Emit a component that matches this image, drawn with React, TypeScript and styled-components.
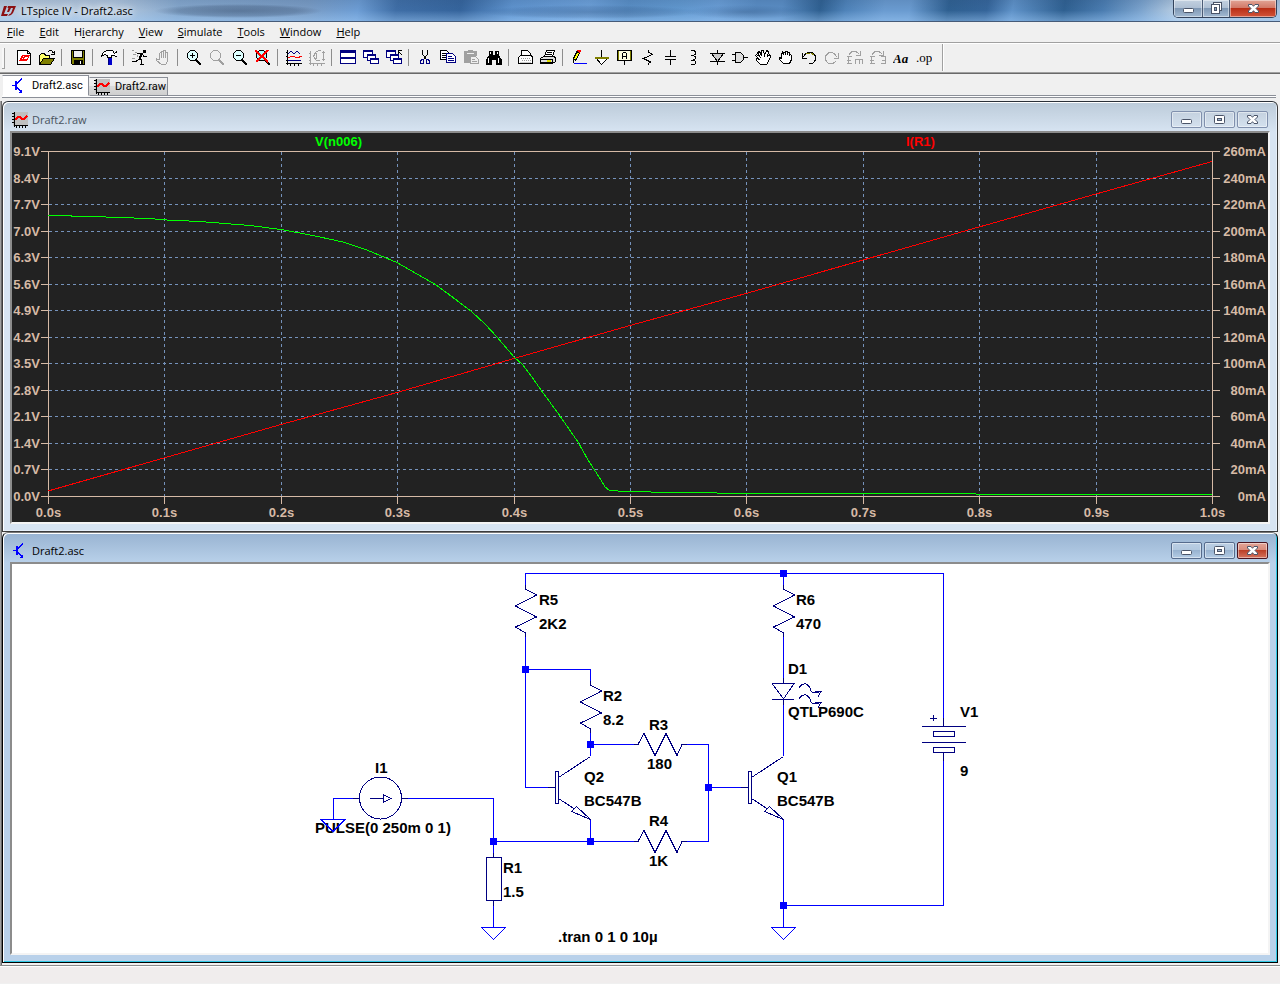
import React from 'react';
import styled, { createGlobalStyle } from 'styled-components';

const GlobalStyle = createGlobalStyle`
  * { box-sizing: border-box; }
  body { margin: 0; background: #f0f0f0; }
  button { font: inherit; color: inherit; margin: 0; padding: 0; border: 0; background: none; }
  svg { display: block; flex-shrink: 0; }
`;

const Shell = styled.div`
  display: flex;
  flex-direction: column;
  min-height: 100vh;
  font-family: 'Open Sans', 'Noto Sans', sans-serif;
  font-size: 11px;
  line-height: 16px;
  color: #000;
  background: #f0f0f0;
`;

const TitleBar = styled.header`
  display: flex;
  align-items: flex-start;
  height: 22px;
  padding-right: 3px;
  border-bottom: 1px solid #465b78;
  background:
    radial-gradient(ellipse 84px 7px at 238px 11px, rgba(35, 55, 85, 0.4), rgba(35, 55, 85, 0.25) 70%, transparent),
    radial-gradient(ellipse 110px 7px at 590px 12px, rgba(35, 65, 105, 0.3), rgba(35, 65, 105, 0.15) 70%, transparent),
    radial-gradient(ellipse 60px 7px at 745px 12px, rgba(35, 65, 105, 0.3), transparent),
    linear-gradient(to bottom, rgba(40, 70, 110, 0.15), rgba(255, 255, 255, 0) 50%, rgba(160, 205, 250, 0.45)),
    linear-gradient(100deg, #b9cadd 0, #b4c8de 9%, #86a8cd 14%, #7a9cc4 24%, #6d9dd4 28%, #3f6ea6 31%,
      #35649c 36%, #5f94cf 40%, #6da1da 46%, #5a8fc6 49%, #6198cf 53%, #6a9ed6 56%, #5a8dc4 59%, #5a8dc4 61%,
      #2f6091 64%, #4f83b9 66%, #6a9bd0 69%, #6a9bd0 71%, #2f6091 74%, #35659a 77%, #5f92c8 79%, #2f6091 83%,
      #4a7cb0 86%, #7ba3cd 89%, #bcd0e4 92%, #a9c3de 100%);
`;

const AppTitle = styled.h1`
  display: flex;
  align-items: center;
  gap: 4px;
  flex: 1;
  height: 21px;
  margin: 0;
  font-size: 11px;
  font-weight: 400;
  text-shadow: 0 0 6px #fff, 0 0 8px #fff;
`;

const CaptionGroup = styled.div`
  display: flex;
  height: 18px;
  border: 1px solid #33435c;
  border-top: 0;
  border-radius: 0 0 5px 5px;
  overflow: hidden;
`;

const CaptionButton = styled.button<{ $w: number; $close?: boolean }>`
  display: flex;
  align-items: center;
  justify-content: center;
  width: ${p => p.$w}px;
  box-shadow: inset 0 0 0 1px rgba(255, 255, 255, 0.45);
  background: ${p => p.$close
    ? 'linear-gradient(#e2a596, #d27a68 45%, #b92f16 50%, #d2543a)'
    : 'linear-gradient(#c3d1e0, #afc0d4 45%, #7f98b5 50%, #a3bad2)'};
  & + & { border-left: 1px solid #4b5c76; }
`;

const MenuBar = styled.nav`
  display: flex;
  gap: 1px;
  height: 22px;
  border-bottom: 1px solid #fff;
  box-shadow: inset 0 -1px 0 #a0a0a0;
`;

const MenuItem = styled.button`
  padding: 0 7px;
  height: 20px;
`;

const ToolBar = styled.div`
  display: flex;
  align-items: stretch;
  height: 30px;
  border-bottom: 1px solid #696969;
  box-shadow: inset 0 -1px 0 #a0a0a0;
`;

const Grip = styled.span`
  width: 3px;
  margin: 4px 8px 4px 2px;
  border-right: 1px solid #a0a0a0;
  border-bottom: 1px solid #a0a0a0;
  background: #f7f7f7;
`;

const ToolButton = styled.button`
  width: 23px;
  padding: 6px 4px 8px 3px;
`;

const ToolSep = styled.span`
  width: 8px;
  margin: 5px 0 7px;
  background: linear-gradient(#8d8d8d, #8d8d8d) 2px 0 / 1px 100% no-repeat;
`;

const ToolEnd = styled.span`
  width: 1px;
  margin: 0 0 2px 6px;
  background: #a0a0a0;
  box-shadow: 1px 0 0 #fff;
`;

const TabStrip = styled.div`
  display: flex;
  align-items: flex-end;
  height: 24px;
  margin: 0 4px 3px 2px;
  padding-bottom: 1px;
  border-bottom: 1px solid #8b8f98;
  background: linear-gradient(#fff, #fff) 0 100% / 100% 1px no-repeat, #f0f0f0;
`;

const TabLine = styled.span`
  flex: 1;
  border-bottom: 1px solid #8b8f98;
`;

const Tab = styled.button<{ $active?: boolean }>`
  display: flex;
  align-items: center;
  gap: 5px;
  height: ${p => (p.$active ? 21 : 19)}px;
  width: ${p => (p.$active ? 87 : 79)}px;
  padding-left: ${p => (p.$active ? 8 : 4)}px;
  border: 1px solid #8b8f98;
  border-left-color: ${p => (p.$active ? '#f0f0f0' : 'transparent')};
  border-bottom-color: ${p => (p.$active ? '#fff' : '#8b8f98')};
  background: ${p => (p.$active ? '#fff' : 'linear-gradient(#f2f2f2, #e9e9e9 45%, #dadada 50%, #cfcfcf)')};
  font-family: Roboto, sans-serif;
`;

const Workspace = styled.main`
  display: flex;
  flex-direction: column;
  flex: 1;
  padding: 0 2px 2px 1px;
  border-left: 1px solid #a0a0a0;
  background: linear-gradient(#696969, #696969) 0 0 / 1px 100% no-repeat, #f0f0f0;
`;

const ChildWindow = styled.section<{ $active?: boolean }>`
  padding: 0 7px 7px;
  border: 1px solid ${p => (p.$active ? '#000' : '#3c3c3c')};
  border-top-color: ${p => (p.$active ? '#777' : '#2c3138')};
  border-radius: 6px 6px 0 0;
  background: ${p => (p.$active
    ? 'linear-gradient(#98b3d1, #b9d1ea 30px, #b9d1ea)'
    : 'linear-gradient(#bccbd9, #d7e4f2 30px, #d7e4f2)')};
  box-shadow: inset 1px 1px 0 #fff, inset -1px -1px 0 ${p => (p.$active ? '#2fc8e4' : '#e4eef8')};
`;

const ChildTitle = styled.header<{ $active?: boolean }>`
  display: flex;
  align-items: center;
  gap: 4px;
  height: 29px;
  padding: 6px 2px 0 2px;
  color: ${p => (p.$active ? '#000' : '#49545f')};
`;

const ChildName = styled.h2`
  flex: 1;
  margin: 0;
  font-size: 11px;
  font-weight: 400;
`;

const ChildControls = styled.div`
  display: flex;
  gap: 2px;
`;

const ChildButton = styled.button<{ $kind: 'idle' | 'active' | 'close' }>`
  display: flex;
  align-items: center;
  justify-content: center;
  width: 31px;
  height: 17px;
  border: 1px solid ${p => ({ idle: '#8090ad', active: '#566b8c', close: '#4a1420' }[p.$kind])};
  border-radius: 2px;
  box-shadow: inset 0 0 0 1px rgba(255, 255, 255, 0.45);
  background: ${p => ({
    idle: 'linear-gradient(#c4d1df, #d4e1ee)',
    active: 'linear-gradient(#bccfe4, #b2c8df 45%, #98b3d0 50%, #b4cce5)',
    close: 'linear-gradient(#e3a598, #d98b7b 45%, #bb4028 50%, #d4735e)',
  }[p.$kind])};
`;

const Client = styled.div<{ $dark?: boolean }>`
  border: 2px solid;
  border-color: #8c8c8c #f4f4f4 #f4f4f4 #8c8c8c;
  background: ${p => (p.$dark ? '#222' : '#fff')};
  svg { width: 100%; height: auto; }
`;

const StatusBar = styled.footer`
  height: 18px;
  margin-bottom: 1px;
  border-top: 1px solid #8c8c8c;
  box-shadow: inset 0 1px 0 #fff;
  background: #f0eded;
`;

const PlotText = styled.text`
  font: bold 13px 'Liberation Sans', Arial, sans-serif;
`;

const PartText = styled.text`
  font: bold 15px 'Liberation Sans', Arial, sans-serif;
`;

/* ---------- glyphs ---------- */

const Px = ({ children, w = 16, h = 16 }: { children: React.ReactNode; w?: number; h?: number }) => (
  <svg width={w} height={h} viewBox={`0 0 ${w} ${h}`} fill="none" stroke="#000" shapeRendering="crispEdges" aria-hidden="true">
    {children}
  </svg>
);

const MinGlyph = () => (
  <svg width="13" height="13" viewBox="0 0 13 13" aria-hidden="true"><rect x="1.500" y="6.500" width="10" height="4" rx="1" fill="#fff" stroke="#4a5468" /></svg>
);
const MaxGlyph = () => (
  <svg width="13" height="13" viewBox="0 0 13 13" aria-hidden="true">
    <rect x="1.500" y="2.500" width="10" height="8" rx="1" fill="#fff" stroke="#4a5468" />
    <rect x="4.500" y="5.500" width="4" height="2" fill="#9fb6d0" stroke="#4a5468" />
  </svg>
);
const RestoreGlyph = () => (
  <svg width="13" height="13" viewBox="0 0 13 13" aria-hidden="true">
    <rect x="3.500" y=".5" width="8" height="8" fill="#fff" stroke="#4a5468" />
    <rect x="1.500" y="2.500" width="8" height="9" fill="#fff" stroke="#4a5468" />
    <rect x="4.500" y="5.500" width="2" height="3" fill="#8fa8c5" stroke="#4a5468" />
  </svg>
);
const CloseGlyph = () => (
  <svg width="13" height="13" viewBox="0 0 13 13" aria-hidden="true">
    <path d="M1.500 2.500H5L6.500 4.300L8 2.500H11.500V4L9 6.500L11.500 9V10.500H8L6.500 8.700L5 10.500H1.500V9L4 6.500L1.500 4Z" fill="#fff" stroke="#4a5468" />
  </svg>
);

const Logo = () => (
  <svg width="17" height="16" viewBox="0 0 17 16" aria-hidden="true">
    <path d="M4 3H7L4 11H8L7 13H1Z" fill="#8c0f12" />
    <path d="M8 3H16L13 10Q11 13 8 13L9.500 11Q11 11 11.500 9L13 5H11L9 9H7L8.500 5H7.500Z" fill="#8c0f12" />
  </svg>
);

const BjtIcon = () => (
  <Px>
    <g stroke="#00f">
      <path d="M1 7.500H5M11 .5L6 5.500M6 9.500L11 14.500" /><path d="M5 3V12" strokeWidth="2" /><path d="M11 15V11L7 15Z" fill="#00f" stroke="none" />
    </g>
  </Px>
);
const WaveIcon = () => (
  <Px>
    <rect x="1" width="15" height="14" fill="#c0c0c0" stroke="none" />
    <path d="M2.500 0V14.500M2 13.500H16M0 1.500H2M0 4.500H2M0 7.500H2M0 10.500H2M4.500 14V16M7.500 14V16M10.500 14V16M13.500 14V16" />
    <path d="M3 8L6 5H8L10 7H12L15 4" stroke="#f00" strokeWidth="2" />
  </Px>
);

const cascade = (
  <g stroke="#000080" fill="#fff">
    <path d="M.5 .5H9.500V7.500H.5ZM.5 1.500H9.500" /><path d="M4.500 4.500H12.500V10.500H4.500ZM4.500 5.500H12.500" /><path d="M7.500 8.500H15.500V13.500H7.500ZM7.500 9.500H15.500" />
  </g>
);
const lens = (c: string, g: string) => (
  <>
    <path d="M4.500 .5H8.500L11.500 3.500V7.500L8.500 10.500H4.500L1.500 7.500V3.500Z" fill={g} stroke={c} />
    <path d="M10 10L15 15" stroke={c} strokeWidth="2" />
  </>
);
const openHand = 'M4.500 9.500L.5 5.500L1.500 4.500L4.500 6.500L2.500 2.500L4.500 1.500L6.500 5.500L6.500 .5H8.500L9.500 5.500L11.500 .5L13.500 1.500L12.500 6.500L14.500 4.500L15.500 6.500L13.500 11.500L11.500 14.500H5.500L1.500 10.500V8.500Z';
const turnArrow = 'M2 4.500L5 1.500H9L12.500 4.500M13.500 1V5.500H9';

const icons: Record<string, React.ReactNode> = {
  'New Schematic': <><path d="M1.500 .5H11.500L14.500 3.500V14.500H1.500Z" fill="#fff" /><path d="M11.500 .5V3.500H14.500" /><path d="M3 11L6 5H8L6 9H8L7 11ZM8 5H14L11 11H7L8 9H10L12 7H9L7 10Z" fill="#f00" stroke="none" /></>,
  Open: <><path d="M.5 14.500V5.500L2.500 3.500H5.500L6.500 5.500H10.500V8.500" fill="#ff6" /><path d="M.5 14.500L4.500 8.500H15.500L11.500 14.500Z" fill="#808000" /><path d="M8.500 2.500L10.500 .5H12.500L14.500 3M15.500 1V4.500H12" /></>,
  Save: <><path d="M1.500 .5H14.500V14.500H2.500L1.500 13.500Z" fill="#808000" /><rect x="4" y="1" width="8" height="7" fill="#f0f0f0" stroke="none" /><path d="M3.500 1V7.500H12.500V1" /><path d="M4 10H13V15H4Z" fill="#000" stroke="none" /><path d="M10.500 11V14" stroke="#fff" /></>,
  'Control Panel': <><path d="M.5 5.500L2.500 2.500L5.500 .5H11.500L13.500 3.500L16 1.500V6.500L12.500 5.500H10.500V7.500H6.500V5.500L3.500 4.500L.5 6.500Z" fill="#fff" /><path d="M7 8H11V15H7Z" fill="#00c" stroke="none" /><path d="M7.500 8V15" stroke="#000080" /></>,
  Run: <><path d="M11 0H14V3H11Z" fill="#000" stroke="none" /><path d="M5 3.500H10L12 6.500H15M10 4L7 9L10 10L9 14H12M7 9L4 11.500H0" /><path d="M9.500 4L7.500 9" strokeWidth="2" /><path d="M0 .5H2M1 4.500H4M3 2.500H5M0 8.500H3M5.500 5V7" stroke="#999" /></>,
  Halt: <path d="M4.500 9.500V3.500L5.500 2.500L6.500 3.500V7.500V1.500H8.500V7.500V.5H10.500V7.500V2.500H12.500V11.500L10.500 14.500H6.500L1.500 10.500V8.500L4.500 10.500" stroke="#a0a0a0" />,
  'Zoom In': <>{lens('#000', '#dff')}<path d="M4 5.500H9M6.500 3V8" /></>,
  Pan: lens('#a0a0a0', 'none'),
  'Zoom Back': <>{lens('#000', '#dff')}<path d="M4 5.500H9" /></>,
  'Zoom to Fit': <>{lens('#000', '#aff')}<path d="M0 0L13 12M13 0L1 12" stroke="#f00" strokeWidth="2" /></>,
  Autorange: <><path d="M1.500 0V15M0 13.500H16M0 2.500H2M0 6.500H2M0 10.500H2M4.500 13V16M8.500 13V16M12.500 13V16" /><path d="M2 4L5 1L8 4L11 1L14 4M2 11L6 10L9 11L15 10" stroke="#000080" /><path d="M2 7.500L7 6L11 8L16 6" stroke="#f00" /></>,
  'Plot Settings': <g stroke="#a0a0a0"><path d="M1.500 1V15M0 13.500H16M0 3.500H2M0 7.500H2M0 10.500H2M4.500 13V16M8.500 13V16M12.500 13V16M14.500 1V11M13 2.500H16M13 9.500H16" /><path d="M6.500 2.500L9.500 .5H12M6.500 2.500L4.500 6.500L7.500 10.500H11M7.500 3V9" /></g>,
  'Tile Windows': <><path d="M.5 .5H15.500V13.500H.5Z" fill="#fff" stroke="#000080" /><path d="M0 2H16M0 8H16" stroke="#000080" strokeWidth="2" /></>,
  'Cascade Windows': cascade,
  'Close Windows': <>{cascade}<path d="M12 .5H16M12.500 0V4M12 1L16 5" /></>,
  Cut: <><path d="M5.500 0V4L9.500 10M10.500 0V4L6.500 10" /><path d="M4.500 9.500H6.500V13.500H3.500V11.500ZM9.500 9.500H11.500L12.500 11.500V13.500H9.500Z" stroke="#000080" /></>,
  Copy: <><path d="M.5 .5H6.500L8.500 2.500V9.500H.5Z" fill="#fff" /><path d="M2 3.500H6M2 5.500H7M2 7.500H6" /><path d="M6.500 3.500H12.500L15.500 6.500V12.500H6.500Z" fill="#fff" stroke="#000080" /><path d="M8 6.500H12M8 8.500H14M8 10.500H14" stroke="#000080" /></>,
  Paste: <><path d="M1 1H5V0H10V1H14V6H8V13H1Z" fill="#a0a0a0" stroke="none" /><path d="M4 3.500H11" stroke="#eee" /><path d="M7.500 6.500H12.500L15.500 9.500V13.500H7.500Z" fill="#eee" stroke="#a0a0a0" /><path d="M9 9.500H12M9 11.500H14" stroke="#a0a0a0" /></>,
  Find: <><path d="M3 1H7V5H9V1H13V5L16 10V15H10V10H6V15H0V10L3 5Z" fill="#000" stroke="none" /><path d="M4.500 2V4M11.500 2V4M2.500 8V13M12.500 8V13" stroke="#fff" /></>,
  'Print Setup': <><path d="M4.500 6.500V.5H10.500L13.500 3.500V6.500" fill="#fff" /><path d="M1.500 7.500L3.500 5.500H14.500L15.500 7.500V13.500H1.500Z" fill="#fff" /><path d="M4 8.500H13M5 10.500H14" stroke="#999" strokeDasharray="1 1" /><path d="M3 12H14" stroke="#ccc" /></>,
  Print: <><path d="M4.500 6.500L6.500 .5H14.500L12.500 6.500" fill="#fff" /><path d="M7 2.500H12M6 4.500H12" /><path d="M.5 8.500L3.500 6.500H13.500L15.500 7.500V11.500L12.500 13.500H.5Z" fill="#ddd" /><path d="M1 9.500H12M1 12.500H12M12.500 9V13" /><path d="M7 11H11" stroke="#dd0" strokeWidth="2" /></>,
  'Draw Wire': <><path d="M3 10L8 1" stroke="#000" strokeWidth="4" /><path d="M4 9L7 3" stroke="#ff0" strokeWidth="2" /><path d="M7 2L9 0" stroke="#f00" strokeWidth="3" /><path d="M3 13.500H16" stroke="#00f" /><path d="M2.500 9V13" /></>,
  'Place Ground': <><path d="M7.500 0V8" /><path d="M1.500 7.500H14.500L7.500 14.500Z" fill="#fff" /><path d="M1 8H15" stroke="#808000" strokeWidth="2" /></>,
  'Label Net': <><path d="M.5 .5H14.500V10.500H.5Z" stroke="#000" fill="#ffd" /><path d="M1.500 1V10M13.500 1V10" stroke="#808000" /><path d="M5.500 9V3.500L6.500 2.500H8.500L9.500 3.500V9M5 6.500H10M7.500 11V15" /></>,
  Resistor: <path d="M8.500 0V2L12.500 4.500L3.500 8.500L10.500 12L8.500 13.500V15" />,
  Capacitor: <path d="M7.500 0V6M2 6.500H13M2 9.500H13M7.500 10V15" />,
  Inductor: <path d="M5 .5H8L9.500 2V4L7.500 5.500H5M7.500 5.500L9.500 7V8.500L7.500 10H5M7.500 10L9.500 11.500V13.500L8 14.500H5" />,
  Diode: <><path d="M8.500 0V15M1 11.500H16" /><path d="M2.500 3.500H14.500L8.500 11.500Z" fill="#ccc" /><path d="M1 3.500H16" /></>,
  Component: <><path d="M3.500 2.500H8.500L11.500 5.500V9.500L8.500 12.500H3.500Z" fill="#ddd" /><path d="M0 4.500H3M0 10.500H3M12 7.500H16" /></>,
  Move: <path d={openHand} fill="#fff" />,
  Drag: <path d="M3.500 8.500V4.500L4.500 2.500L5.500 4.500V2.500H7.500V4.500V1.500H9.500V4.500V2.500H11.500V5.500L12.500 4.500L13.500 5.500V9.500L11.500 13.500H5.500L1.500 9.500V7.500L3.500 8.500" fill="#fff" />,
  Undo: <><path d="M2 7L5 3.500L8 2.500H11L14.500 6V10L11.500 13.500H8" strokeWidth="1" /><path d="M5 3.500H9M10 3L13 5" stroke="#808000" /><path d="M1.500 3V8.500H6" /></>,
  Redo: <g stroke="#a0a0a0"><path d="M13 7L10 3.500L8 2.500H5L1.500 6V10L4.500 13.500H9L12 11" /><path d="M14.500 3V8.500H10" /></g>,
  Rotate: <g stroke="#a0a0a0"><path d={turnArrow} /><path d="M1 6V14M0 6.500H5M0 10H4M0 13.500H5M8 9H16M8.500 9V14M12 9V14M15.500 9V14" /></g>,
  Mirror: <g stroke="#a0a0a0"><path d={turnArrow} /><path d="M1 6V14M0 6.500H5M0 10H4M0 13.500H5M11 6.500H16M12 10H16M11 13.500H16M15.500 6V14" /></g>,
  Text: <text x="0" y="13" fill="#000" stroke="none" style={{ font: "italic bold 13px 'Liberation Serif', serif" }}>Aa</text>,
  'SPICE Directive': <text x="0" y="12" fill="#000" stroke="none" style={{ font: "13px 'Liberation Serif', serif" }}>.op</text>,
};

const toolGroups: string[][] = [
  ['New Schematic', 'Open'],
  ['Save'],
  ['Control Panel'],
  ['Run', 'Halt'],
  ['Zoom In', 'Pan', 'Zoom Back', 'Zoom to Fit'],
  ['Autorange', 'Plot Settings'],
  ['Tile Windows', 'Cascade Windows', 'Close Windows'],
  ['Cut', 'Copy', 'Paste', 'Find'],
  ['Print Setup', 'Print'],
  ['Draw Wire', 'Place Ground', 'Label Net', 'Resistor', 'Capacitor', 'Inductor', 'Diode', 'Component', 'Move', 'Drag',
    'Undo', 'Redo', 'Rotate', 'Mirror', 'Text', 'SPICE Directive'],
];

const menus = ['File', 'Edit', 'Hierarchy', 'View', 'Simulate', 'Tools', 'Window', 'Help'];

/* ---------- waveform plot ---------- */

const volts = ['9.1V', '8.4V', '7.7V', '7.0V', '6.3V', '5.6V', '4.9V', '4.2V', '3.5V', '2.8V', '2.1V', '1.4V', '0.7V', '0.0V'];
const rowY = (i: number) => 151.5 + Math.round((345 * i) / 13);
const colX = (i: number) => 48.5 + Math.round(116.4 * i);
const TAN = '#d6baa6';

const Plot = () => (
  <svg viewBox="12 133 1256 389" role="img" aria-label="Waveforms of V(n006) and I(R1)">
    <g shapeRendering="crispEdges" fill="none">
      <g stroke="#7592bb" strokeDasharray="3 3">
        {volts.slice(1, -1).map((v, i) => <path key={v} d={`M49 ${rowY(i + 1)}H1212`} />)}
        {[1, 2, 3, 4, 5, 6, 7, 8, 9].map(i => <path key={i} d={`M${colX(i)} 152V496`} />)}
      </g>
      <g stroke={TAN}>
        <path d="M41 151.500H1220M41 496.500H1220M48.500 151V504M1212.500 151V504" />
        {volts.map((v, i) => <path key={v} d={`M41 ${rowY(i)}H48M1212 ${rowY(i)}H1220`} />)}
        {[1, 2, 3, 4, 5, 6, 7, 8, 9].map(i => <path key={i} d={`M${colX(i)} 496V504`} />)}
      </g>
      <path stroke="#f00" d="M48 491L281 424.500L397 392.500L514 358.500L630 325.500L746 293.500L863 260L979 227L1096 194L1212 161.500" />
      <path stroke="#0f0" d="M48 215.500H71L72 216.500H105L107 217.500H133L135 218.500H154L156 219.500L200 221.500L250 225.500L281 229.500L313 235.500L343 242L367 250L397 262.500L417 274L437 285.500L457 300.500L472 312L485 324L497 337L514 357L523 365L532 377L541 390L560 416L578 442L588 460L600 478.500L605 487L609 490L623 491.500H650L652 492.500H716L718 493.500H975L977 494.500H1212" />
    </g>
    <g fill={TAN}>
      {volts.map((v, i) => <PlotText key={v} x={40} y={rowY(i) + 4} textAnchor="end">{v}</PlotText>)}
      {volts.map((v, i) => <PlotText key={v} x={1266} y={rowY(i) + 4} textAnchor="end">{`${260 - 20 * i}mA`}</PlotText>)}
      {volts.slice(0, 11).map((v, i) => <PlotText key={v} x={colX(i)} y={517} textAnchor="middle">{`${(i / 10).toFixed(1)}s`}</PlotText>)}
    </g>
    <PlotText x={315} y={146} fill="#0f0">V(n006)</PlotText>
    <PlotText x={906} y={146} fill="#f00">I(R1)</PlotText>
  </svg>
);

/* ---------- schematic ---------- */

const ResV = ({ x, y }: { x: number; y: number }) => (
  <path d={`M${x} ${y - 4}v4l11 6l-21 11l21 11l-21 10l10 6v4`} />
);
const ResH = ({ x, y }: { x: number; y: number }) => (
  <path d={`M${x - 4} ${y}h4l6 -11l11 22l11 -22l11 22l5 -11h5`} />
);
const Npn = ({ x, y }: { x: number; y: number }) => (
  <>
    <rect x={x} y={y - 16} width="3" height="32" />
    <path d={`M${x - 8} ${y}h8M${x + 3} ${y - 10}l32 -21M${x + 3} ${y + 11}l17 11M${x + 21} ${y + 19}l14 13l-19 -8z`} />
  </>
);
const Ground = ({ x, y }: { x: number; y: number }) => <path stroke="#00f" d={`M${x - 12} ${y}h24l-12 12z`} />;

const nodes = [[783, 573], [525, 669], [590, 744], [493, 841], [590, 841], [708, 787], [783, 905]];

const labels: [number, number, string][] = [
  [539, 605, 'R5'], [539, 629, '2K2'], [603, 701, 'R2'], [603, 725, '8.2'], [649, 730, 'R3'], [647, 769, '180'],
  [649, 826, 'R4'], [649, 866, '1K'], [584, 782, 'Q2'], [584, 806, 'BC547B'], [796, 605, 'R6'], [796, 629, '470'],
  [788, 674, 'D1'], [788, 717, 'QTLP690C'], [777, 782, 'Q1'], [777, 806, 'BC547B'], [960, 717, 'V1'], [960, 776, '9'],
  [375, 773, 'I1'], [315, 833, 'PULSE(0 250m 0 1)'], [503, 873, 'R1'], [503, 897, '1.5'], [558, 942, '.tran 0 1 0 10µ'],
];

const Schematic = () => (
  <svg viewBox="12 564 1256 389" role="img" aria-label="Circuit schematic">
    {labels.map(([x, y, t]) => <PartText key={`${x}-${y}`} x={x} y={y}>{t}</PartText>)}
    <g fill="none" shapeRendering="crispEdges">
      <g stroke="#00f">
        <path d="M525.500 585V573.500H943.500V722M943.500 757V905.500H783.500M783.500 573V585M525.500 637V787.500H548M525.500 669.500H590.500V681M590.500 733V756M590.500 744.500H634M686 744.500H708.500V841.500H686M634 841.500H493.500M590.500 819V841M708 787.500H741M783.500 637V680M783.500 703V756M783.500 819V927M401 798.500H493.500V853M493.500 905V927M359 798.500H333.500V819" />
      </g>
      <g stroke="#000080">
        <ResV x={525.5} y={589} /><ResV x={783.5} y={589} /><ResV x={590.5} y={685} />
        <ResH x={638} y={744.5} /><ResH x={638} y={841.5} />
        <Npn x={555.5} y={787.5} /><Npn x={748.5} y={787.5} />
        <path d="M783.500 678V683M772 683.500H794L783.500 699L772 683.500M772 699.500H794M783.500 699V705" />
        <path d="M799 688Q802 683 806 684Q810 686 811 691Q813 694 819 692M815 691.500H821L818 697M799 699Q802 694 806 695Q810 697 811 702Q813 705 819 703M815 702.500H821L818 708" />
        <path d="M943.500 718V726M922 726.500H966M922 742.500H966M943.500 753V761M933.500 715V721M930 718.500H937" />
        <rect x="933.500" y="731.500" width="21" height="5" /><rect x="933.500" y="747.500" width="21" height="5" />
        <circle cx="380.500" cy="798" r="21" /><path d="M370 798.500H384M383.500 795V802L391 798.500ZM401 798.500H408M353 798.500H360" />
        <rect x="486.500" y="857.500" width="15" height="43" /><path d="M493.500 853V857M493.500 901V906" />
      </g>
      <Ground x={493.5} y={927.5} /><Ground x={783.5} y={927.5} /><Ground x={333} y={819.5} />
    </g>
    {nodes.map(([x, y]) => <rect key={`${x}-${y}`} x={x - 3} y={y - 3} width="7" height="7" fill="#00f" />)}
  </svg>
);

const Child = ({ name, icon, active, children }: { name: string; icon: React.ReactNode; active?: boolean; children: React.ReactNode }) => (
  <ChildWindow $active={active} aria-label={name}>
    <ChildTitle $active={active}>
      {icon}
      <ChildName>{name}</ChildName>
      <ChildControls>
        <ChildButton $kind={active ? 'active' : 'idle'} aria-label="Minimize"><MinGlyph /></ChildButton>
        <ChildButton $kind={active ? 'active' : 'idle'} aria-label="Maximize"><MaxGlyph /></ChildButton>
        <ChildButton $kind={active ? 'close' : 'idle'} aria-label="Close"><CloseGlyph /></ChildButton>
      </ChildControls>
    </ChildTitle>
    <Client $dark={!active}>{children}</Client>
  </ChildWindow>
);

export default function App() {
  return (
    <Shell>
      <GlobalStyle />
      <TitleBar>
        <AppTitle><Logo />LTspice IV - Draft2.asc</AppTitle>
        <CaptionGroup>
          <CaptionButton $w={28} aria-label="Minimize"><MinGlyph /></CaptionButton>
          <CaptionButton $w={27} aria-label="Restore"><RestoreGlyph /></CaptionButton>
          <CaptionButton $w={47} $close aria-label="Close"><CloseGlyph /></CaptionButton>
        </CaptionGroup>
      </TitleBar>
      <MenuBar>
        {menus.map(m => {
          const k = m === 'Hierarchy' ? 1 : 0;
          return <MenuItem key={m}>{m.slice(0, k)}<u>{m[k]}</u>{m.slice(k + 1)}</MenuItem>;
        })}
      </MenuBar>
      <ToolBar role="toolbar">
        <Grip />
        {toolGroups.map((g, i) => (
          <React.Fragment key={g[0]}>
            {i > 0 && <ToolSep />}
            {g.map(t => <ToolButton key={t} aria-label={t}><Px>{icons[t]}</Px></ToolButton>)}
          </React.Fragment>
        ))}
        <ToolEnd />
      </ToolBar>
      <TabStrip>
        <Tab $active><BjtIcon />Draft2.asc</Tab>
        <Tab><WaveIcon />Draft2.raw</Tab>
        <TabLine />
      </TabStrip>
      <Workspace>
        <Child name="Draft2.raw" icon={<WaveIcon />}><Plot /></Child>
        <Child name="Draft2.asc" icon={<BjtIcon />} active><Schematic /></Child>
      </Workspace>
      <StatusBar />
    </Shell>
  );
}
